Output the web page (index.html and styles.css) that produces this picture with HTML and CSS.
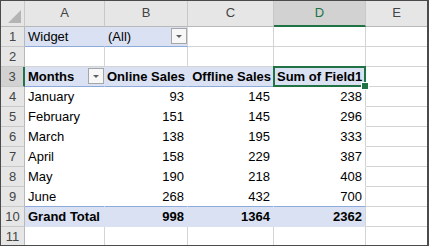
FILE: index.html
```html
<!DOCTYPE html>
<html lang="en">
<head>
    <meta charset="UTF-8">
    <title>Pivot Table</title>
    <link rel="stylesheet" href="styles.css">
</head>
<body>
    <div class="sheet">
        <div class="row col-head">
            <div class="cell rh corner"><span class="tri"></span></div>
            <div class="cell a">A</div>
            <div class="cell b">B</div>
            <div class="cell c">C</div>
            <div class="cell d sel-col">D</div>
            <div class="cell e">E</div>
        </div>
        <div class="row">
            <div class="cell rh">1</div>
            <div class="cell a pv filter">Widget</div>
            <div class="cell b pv filter join">(All)<span class="drop"></span></div>
            <div class="cell c"></div>
            <div class="cell d"></div>
            <div class="cell e"></div>
        </div>
        <div class="row">
            <div class="cell rh">2</div>
            <div class="cell a"></div>
            <div class="cell b"></div>
            <div class="cell c"></div>
            <div class="cell d"></div>
            <div class="cell e"></div>
        </div>
        <div class="row">
            <div class="cell rh sel-row">3</div>
            <div class="cell a pv head">Months<span class="drop"></span></div>
            <div class="cell b pv head num">Online Sales</div>
            <div class="cell c pv head num">Offline Sales</div>
            <div class="cell d pv head active">Sum of Field1<span class="handle"></span></div>
            <div class="cell e"></div>
        </div>
        <div class="row">
            <div class="cell rh">4</div>
            <div class="cell a pv body">January</div>
            <div class="cell b pv body num">93</div>
            <div class="cell c pv body num">145</div>
            <div class="cell d pv body num last">238</div>
            <div class="cell e"></div>
        </div>
        <div class="row">
            <div class="cell rh">5</div>
            <div class="cell a pv body">February</div>
            <div class="cell b pv body num">151</div>
            <div class="cell c pv body num">145</div>
            <div class="cell d pv body num last">296</div>
            <div class="cell e"></div>
        </div>
        <div class="row">
            <div class="cell rh">6</div>
            <div class="cell a pv body">March</div>
            <div class="cell b pv body num">138</div>
            <div class="cell c pv body num">195</div>
            <div class="cell d pv body num last">333</div>
            <div class="cell e"></div>
        </div>
        <div class="row">
            <div class="cell rh">7</div>
            <div class="cell a pv body">April</div>
            <div class="cell b pv body num">158</div>
            <div class="cell c pv body num">229</div>
            <div class="cell d pv body num last">387</div>
            <div class="cell e"></div>
        </div>
        <div class="row">
            <div class="cell rh">8</div>
            <div class="cell a pv body">May</div>
            <div class="cell b pv body num">190</div>
            <div class="cell c pv body num">218</div>
            <div class="cell d pv body num last">408</div>
            <div class="cell e"></div>
        </div>
        <div class="row">
            <div class="cell rh">9</div>
            <div class="cell a pv body pre-total">June</div>
            <div class="cell b pv body num pre-total">268</div>
            <div class="cell c pv body num pre-total">432</div>
            <div class="cell d pv body num last pre-total">700</div>
            <div class="cell e"></div>
        </div>
        <div class="row">
            <div class="cell rh">10</div>
            <div class="cell a pv total">Grand Total</div>
            <div class="cell b pv total num">998</div>
            <div class="cell c pv total num">1364</div>
            <div class="cell d pv total num last">2362</div>
            <div class="cell e"></div>
        </div>
        <div class="row">
            <div class="cell rh">11</div>
            <div class="cell a"></div>
            <div class="cell b"></div>
            <div class="cell c"></div>
            <div class="cell d"></div>
            <div class="cell e"></div>
        </div>
    </div>
</body>
</html>
```

FILE: styles.css
```css
:root {
    --grid: #d4d4d4;
    --head-bg: #e6e6e6;
    --pivot: #d9e1f2;
    --pivot-line: #8ea9db;
    --green: #217346;
}
body {
    margin: 0;
    font-family: "Liberation Sans", Arial, sans-serif;
    font-size: 13px;
    color: #000000;
    background: #ffffff;
}
.sheet {
    width: 429px;
    height: 246px;
    border: 1px solid #4b4b4b;
    border-right-width: 2px;
    box-sizing: border-box;
    overflow: hidden;
    display: flex;
    flex-direction: column;
}
.row {
    display: grid;
    grid-template-columns: 24px 80px 83px 86px 92px 1fr;
    height: 20px;
    flex: none;
}
.cell {
    position: relative;
    box-sizing: border-box;
    border-right: 1px solid var(--grid);
    border-bottom: 1px solid var(--grid);
    padding: 0 3px;
    line-height: 19px;
    white-space: nowrap;
}
.e {
    border-right: none;
}

/* headers */
.col-head {
    height: 26px;
}
.col-head .cell {
    background: var(--head-bg);
    color: #444444;
    text-align: center;
    line-height: 24px;
    border-right-color: #c8c8c8;
    border-bottom: 1px solid #b8b8b8;
}
.col-head .sel-col {
    background: #d2d2d2;
    color: var(--green);
    border-bottom: 2px solid var(--green);
}
.corner .tri {
    position: absolute;
    right: 3px;
    bottom: 3px;
    width: 0;
    height: 0;
    border-left: 13px solid transparent;
    border-bottom: 13px solid #b4b4b4;
}
.rh {
    background: var(--head-bg);
    color: #444444;
    text-align: center;
    padding: 0;
    border-right-color: #b8b8b8;
    border-bottom-color: #c8c8c8;
}
.rh.sel-row {
    background: #d2d2d2;
    border-right: 2px solid var(--green);
}

/* pivot */
.pv {
    background: #ffffff;
    border-right-color: #ffffff;
    border-bottom-color: #ffffff;
}
.pv.filter {
    background: var(--pivot);
    border-right-color: var(--pivot);
    border-bottom-color: var(--pivot-line);
}
.pv.filter.join {
    border-right-color: var(--grid);
}
.pv.head {
    background: var(--pivot);
    border-right-color: var(--pivot);
    border-bottom-color: var(--pivot-line);
    font-weight: bold;
}
.pv.last {
    border-right-color: var(--grid);
}
.pv.pre-total {
    border-bottom-color: var(--pivot-line);
}
.pv.total {
    background: var(--pivot);
    border-right-color: var(--pivot);
    border-bottom-color: var(--pivot);
    font-weight: bold;
}
.pv.total.last {
    border-right-color: var(--grid);
}
.num {
    text-align: right;
}
.head.num {
    padding: 0 2px;
}
.drop {
    position: absolute;
    right: 0;
    top: 1px;
    width: 16px;
    height: 16px;
    box-sizing: border-box;
    border: 1px solid #a6a6a6;
    background: #f7f7f7;
}
.drop::after {
    content: "";
    position: absolute;
    left: 4px;
    top: 6px;
    border-left: 3px solid transparent;
    border-right: 3px solid transparent;
    border-top: 3px solid #606060;
}

/* active cell */
.active::before {
    content: "";
    position: absolute;
    left: -1px;
    top: -1px;
    right: -1px;
    bottom: -1px;
    border: 2px solid var(--green);
}
.handle {
    position: absolute;
    right: -4px;
    bottom: -4px;
    width: 6px;
    height: 6px;
    background: var(--green);
    border: 1px solid #ffffff;
    z-index: 2;
}
```
